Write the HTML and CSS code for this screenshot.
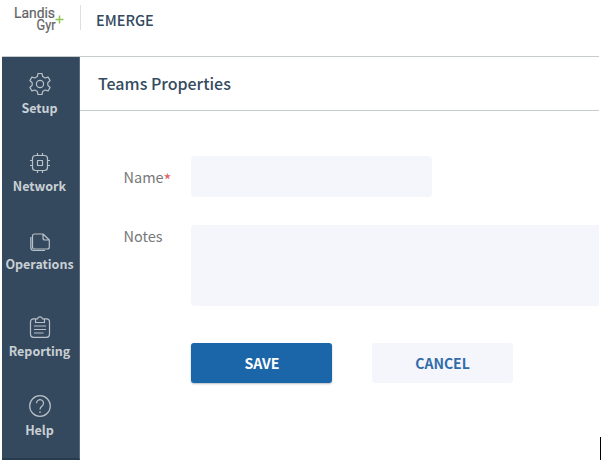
FILE: index.html
```
<!DOCTYPE html>
<html lang="en">
<head>
<meta charset="utf-8">
<title>Teams Properties</title>
<link rel="stylesheet" href="styles.css">
</head>
<body>
<header class="topbar">
  <svg class="logo" width="52" height="30" viewBox="0 0 52 30" role="img" aria-label="Landis+Gyr">
    <text x="0" y="12.500" textLength="41" lengthAdjust="spacingAndGlyphs">Landis</text>
    <text x="22.500" y="24.500" textLength="19" lengthAdjust="spacingAndGlyphs">Gyr</text>
    <path class="plus" d="M41.500 14.500h8M45.500 10.500v8"/>
  </svg>
  <span class="divider"></span>
  <span class="product">EMERGE</span>
</header>
<div class="shell">
  <nav class="sidebar">
    <a class="item setup">
      <svg width="24" height="24" viewBox="0 0 24 24"><path d="M10 1.500h4l.7 3.100 2.400 1.400 3-.9 2 3.400-2.300 2.200v2.600l2.300 2.200-2 3.400-3-.9-2.400 1.400-.7 3.100h-4l-.7-3.100-2.400-1.400-3 .9-2-3.400 2.300-2.200v-2.600L1.900 8.500l2-3.400 3 .9 2.400-1.400z"/><circle cx="12" cy="12" r="3.600"/></svg>
      <span>Setup</span>
    </a>
    <a class="item network">
      <svg width="24" height="24" viewBox="0 0 24 24"><rect x="4.500" y="4.500" width="15" height="15" rx="3"/><rect x="9.500" y="9.500" width="5" height="5"/><path d="M9.500 2v2.500M14.500 2v2.500M9.500 19.500V22M14.500 19.500V22M2 9.500h2.500M2 14.500h2.500M19.500 9.500H22M19.500 14.500H22"/></svg>
      <span>Network</span>
    </a>
    <a class="item operations">
      <svg width="24" height="24" viewBox="0 0 24 24"><path d="M6.500 4H15l6.300 6v7a2 2 0 0 1-2 2H6.500a2 2 0 0 1-2-2V6a2 2 0 0 1 2-2zM15 4v4a2 2 0 0 0 2 2h4.300M2.800 7v10.500a3 3 0 0 0 3 3H17"/></svg>
      <span>Operations</span>
    </a>
    <a class="item reporting">
      <svg width="24" height="24" viewBox="0 0 24 24"><path d="M8 3.800H5.500a3 3 0 0 0-3 3v12.500a3 3 0 0 0 3 3h13a3 3 0 0 0 3-3V6.800a3 3 0 0 0-3-3H16M7.500 7.500V4.800a1 1 0 0 1 1-1h1a2.600 2.600 0 0 1 5 0h1a1 1 0 0 1 1 1v2.700zM6 11h12M6 14.500h12M6 18h9.500"/></svg>
      <span>Reporting</span>
    </a>
    <a class="item help">
      <svg width="24" height="24" viewBox="0 0 24 24"><circle cx="12" cy="12" r="10.300"/><path d="M8.500 9.200a3.500 3.500 0 1 1 5.600 2.800c-1.300 1-2.100 1.600-2.100 3.500M12 17.300v1.700"/></svg>
      <span>Help</span>
    </a>
  </nav>
  <main class="content">
    <h1>Teams Properties</h1>
    <form class="form">
      <label class="name-label" for="name">Name<b>*</b></label>
      <input id="name" class="field" type="text">
      <label class="notes-label" for="notes">Notes</label>
      <textarea id="notes" class="field notes"></textarea>
      <div class="actions">
        <button type="button" class="save">SAVE</button>
        <button type="button" class="cancel">CANCEL</button>
      </div>
    </form>
  </main>
</div>
<span class="caret"></span>
</body>
</html>
```
FILE: styles.css
```
* { box-sizing: border-box; }
body {
  margin: 0;
  width: 604px;
  height: 460px;
  overflow: hidden;
  background: #fff;
  font-family: "Noto Sans CJK SC", "Noto Sans", sans-serif;
  color: #334a60;
}
.topbar {
  display: flex;
  align-items: flex-start;
  width: 597px;
  height: 57px;
  margin-left: 2px;
  padding: 5px 0 0 12px;
  border-bottom: 1px solid #c6cbcd;
}
.logo text {
  font: 400 14px Roboto, sans-serif;
  fill: #626366;
  stroke: #626366;
  stroke-width: .2;
}
.plus {
  stroke: #8cc657;
  stroke-width: 1.500;
}
.divider {
  width: 1px;
  height: 25px;
  margin-left: 14px;
  background: #dddfe1;
}
.product {
  margin: 5px 0 0 15px;
  font-size: 14.500px;
  font-weight: 500;
  line-height: 20px;
}
.shell {
  display: flex;
  width: 597px;
  height: 403px;
  margin-left: 2px;
}
.sidebar {
  width: 78px;
  flex: none;
  padding-right: 2px;
  background: #35495e;
  border-right: 1px solid #5b6a7b;
  border-bottom: 2px solid #283c50;
}
.item {
  display: flex;
  flex-direction: column;
  align-items: center;
  justify-content: flex-end;
  height: 78px;
  color: #c9d0d5;
  font-size: 12.500px;
  font-weight: 700;
  line-height: 20px;
}
.item svg {
  margin-bottom: 2px;
  fill: none;
  stroke: #b9c1c8;
  stroke-width: 1.200;
  stroke-linejoin: round;
}
.setup { height: 61px; }
.network svg { margin-bottom: 1px; }
.operations svg { margin-bottom: 0; }
.reporting { height: 87px; }
.help { height: 79px; }
.content { flex: 1; min-width: 0; }
h1 {
  height: 54px;
  margin: 0;
  padding: 16px 0 0 18px;
  border-bottom: 1px solid #c6cbcd;
  font-size: 16px;
  font-weight: 500;
  line-height: 20px;
}
.form {
  display: grid;
  grid-template-columns: 67.500px 1fr;
  grid-template-rows: 41px 81px 41px;
  row-gap: 28px;
  padding: 45px 0 0 43.500px;
}
label {
  color: #777;
  font-size: 14.500px;
  line-height: 20px;
}
label b {
  color: #df6464;
  font-size: 17px;
  font-weight: 400;
  line-height: 1px;
  vertical-align: -4px;
}
.name-label { padding-top: 11px; }
.notes-label { padding-top: 1px; }
.field {
  width: 241px;
  height: 41px;
  margin: 0;
  border: 0;
  border-radius: 4px;
  background: #f5f6fb;
}
.notes {
  width: 100%;
  height: 81px;
  border-radius: 4px 0 0 4px;
  resize: none;
}
.actions {
  grid-column: 2;
  display: flex;
  gap: 39.500px;
  padding-top: 9px;
}
button {
  flex: none;
  width: 141px;
  height: 40px;
  padding: 0 0 0 1px;
  border: 0;
  border-radius: 3px;
  font: 700 14.200px/40px "Noto Sans CJK SC", "Noto Sans", sans-serif;
}
.save {
  background: #1b65a9;
  color: #fff;
  box-shadow: 0 1px 2px #b5bdc5;
}
.cancel { background: #f5f6fb; color: #316baa; font-size: 14px; }
.caret {
  position: absolute;
  left: 600px;
  top: 437px;
  width: 1px;
  height: 23px;
  background: #000;
}
```
